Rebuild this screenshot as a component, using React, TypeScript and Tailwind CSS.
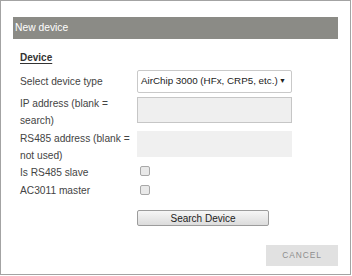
import React from "react";

const font = { fontFamily: '"Liberation Sans", Arial, sans-serif' };

const Label = ({ children }: { children: React.ReactNode }) => (
  <div className="w-[117px] shrink-0 whitespace-nowrap text-[10.2px] leading-[17px] text-[#444]">{children}</div>
);

export default function App() {
  return (
    <div className="h-[276px] w-[352px] bg-white" style={font}>
      <div className="flex h-[275px] w-[351px] flex-col border border-[#a3a3a3] bg-white px-[12px] pt-[16px]">
        <div className="flex h-[22px] items-center bg-[#8b8b86] px-[2px] text-[10.3px] text-white">
          New device
        </div>

        <div className="flex flex-col pl-[7px] pr-[35px]">
          <div className="mt-[10px] text-[10px] font-bold leading-[17px] text-[#333] underline underline-offset-2">
            Device
          </div>

          <div className="mt-[4px] flex h-[23px] items-center">
            <Label>Select device type</Label>
            <div className="flex h-[23px] w-[155px] items-center justify-between rounded-[2px] border border-[#c9c9c9] bg-white pl-[3px] pr-[5px] text-[9.8px] text-[#222]">
              <span>AirChip 3000 (HFx, CRP5, etc.)</span>
              <span className="text-[7px] text-[#222]">▼</span>
            </div>
          </div>

          <div className="mt-[2px] flex">
            <Label>
              IP address (blank =<br />search)
            </Label>
            <div className="mt-[2px] h-[26px] w-[155px] border border-[#c6c6c6] bg-[#efefef]" />
          </div>

          <div className="mt-[1px] flex">
            <Label>
              RS485 address (blank =<br />not used)
            </Label>
            <div className="mt-[1px] h-[26px] w-[155px] bg-[#f0f0f0]" />
          </div>

          <div className="flex h-[18px] items-start">
            <Label>Is RS485 slave</Label>
            <div className="ml-[3px] mt-[2px] h-[10px] w-[10px] rounded-[2px] border border-[#a8a8a8] bg-[#e9e9e9]" />
          </div>

          <div className="flex h-[18px] items-start">
            <Label>AC3011 master</Label>
            <div className="ml-[3px] mt-[3px] h-[10px] w-[10px] rounded-[2px] border border-[#a8a8a8] bg-[#e9e9e9]" />
          </div>

          <div className="mt-[10px] flex">
            <div className="w-[117px] shrink-0" />
            <button className="flex h-[16px] w-[132px] items-center justify-center rounded-[2px] border border-[#9c9c9c] bg-gradient-to-b from-[#f6f6f6] to-[#dcdcdc] text-[10px] text-[#222]">
              Search Device
            </button>
          </div>
        </div>

        <div className="mt-[19px] flex justify-end pr-0">
          <button className="flex h-[21px] w-[72px] items-center justify-center bg-[#e1e1e1] text-[8.4px] tracking-[0.9px] text-[#8e8e8e]">
            CANCEL
          </button>
        </div>
      </div>
    </div>
  );
}
